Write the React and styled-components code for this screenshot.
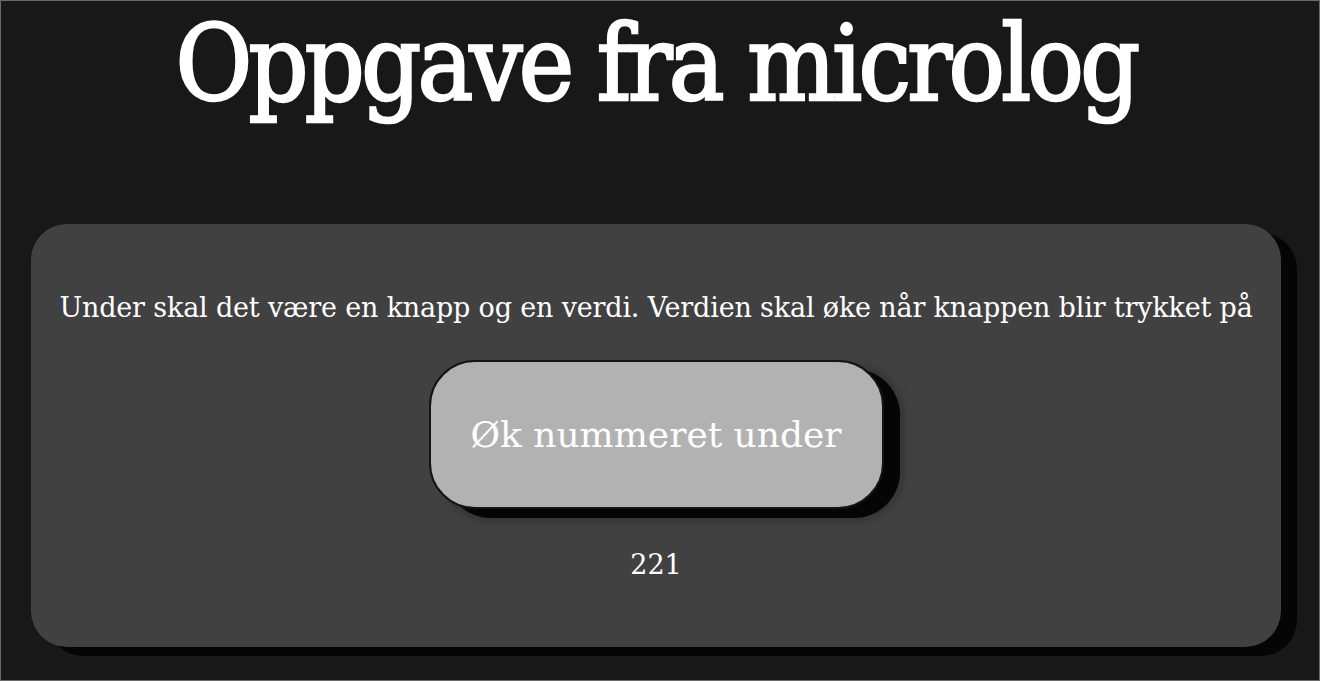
import React, { useState } from 'react';
import styled, { createGlobalStyle } from 'styled-components';

const GlobalStyle = createGlobalStyle`
  html, body {
    margin: 0;
    padding: 0;
    background: #181818;
  }
  body {
    font-family: "DejaVu Serif", "Liberation Serif", serif;
    color: #ffffff;
    height: 681px;
    box-sizing: border-box;
    border: 1px solid #6a6a6a;
    overflow: hidden;
  }
`;

const Page = styled.main`
  display: flex;
  flex-direction: column;
  align-items: stretch;
`;

const Title = styled.h1`
  margin: 3px 0 0;
  text-align: center;
  font-size: 104px;
  font-weight: 400;
  font-stretch: condensed;
  line-height: 120px;
  letter-spacing: -3.6px;
  padding-right: 8px;
  -webkit-text-stroke: 2.5px #ffffff;
`;

const Card = styled.section`
  margin: 100px 38px 0 30px;
  height: 423px;
  box-sizing: border-box;
  background: #414141;
  border-radius: 36px;
  box-shadow: 16px 9px 0 #050505;
  display: flex;
  flex-direction: column;
  align-items: center;
  padding-top: 66px;
`;

const Lead = styled.p`
  margin: 0;
  font-size: 27px;
  line-height: 36px;
  letter-spacing: -0.17px;
`;

const BumpButton = styled.button`
  margin-top: 34px;
  width: 455px;
  height: 149px;
  background: #b2b2b2;
  border: 2px solid #141414;
  border-radius: 46px;
  box-shadow: 16px 9px 0 #050505, 16px 9px 6px 4px #353535;
  color: #ffffff;
  font-family: inherit;
  font-size: 36px;
  cursor: pointer;
`;

const Count = styled.div`
  margin-top: 38px;
  font-size: 27px;
  line-height: 36px;
`;

export default function App() {
  const [count, setCount] = useState(221);
  return (
    <>
      <GlobalStyle />
      <Page>
        <Title>Oppgave fra microlog</Title>
        <Card>
          <Lead>Under skal det være en knapp og en verdi. Verdien skal øke når knappen blir trykket på</Lead>
          <BumpButton onClick={() => setCount((c) => c + 1)}>Øk nummeret under</BumpButton>
          <Count>{count}</Count>
        </Card>
      </Page>
    </>
  );
}
